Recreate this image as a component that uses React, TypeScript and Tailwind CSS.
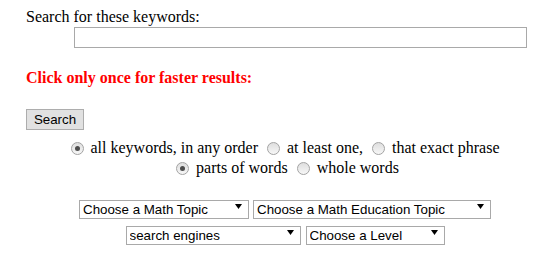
import React from 'react'

const serif = { fontFamily: '"Liberation Serif", "Times New Roman", serif' }

function Radio({ checked = false, className = '' }: { checked?: boolean; className?: string }) {
  return (
    <span
      className={`flex h-[13px] w-[13px] shrink-0 items-center justify-center rounded-full border border-[#a3a3a3] bg-gradient-to-b from-[#dedede] to-[#f7f7f7] ${className}`}
    >
      {checked && <span className="h-[5px] w-[5px] rounded-full bg-[#4d4d4d]" />}
    </span>
  )
}

function Select({ label, width }: { label: string; width: string }) {
  return (
    <div className={`relative h-[19px] ${width}`}>
      <select
        defaultValue={label}
        className="h-full w-full appearance-none rounded-none border border-[#a9a9a9] bg-white pl-[3px] text-[13.33px] leading-[17px] text-black outline-none"
        style={{ fontFamily: '"Liberation Sans", Arial, sans-serif' }}
      >
        <option>{label}</option>
      </select>
      {/* dropdown arrow */}
      <svg
        className="pointer-events-none absolute right-[7px] top-[7px]"
        width="7"
        height="5"
        viewBox="0 0 7 5"
      >
        <path d="M0 0h7L3.5 5z" fill="#000" />
      </svg>
    </div>
  )
}

export default function App() {
  return (
    <div className="min-h-[260px] w-[550px] bg-white pl-[26px] pr-[6px] pt-[8px] text-[16px] text-black" style={serif}>
      <div className="leading-[18px]">Search for these keywords:</div>
      <input
        type="text"
        className="ml-[48px] mt-[1px] block h-[21px] w-[453px] border border-[#a9a9a9] bg-white outline-none"
      />

      <div className="mt-[21px] font-bold leading-[18px] text-[#ff0000]">Click only once for faster results:</div>

      <button
        className="mt-[22px] block h-[21px] w-[58px] border border-[#adadad] bg-[#e1e1e1] text-[13.33px] leading-[17px] text-black"
        style={{ fontFamily: '"Liberation Sans", Arial, sans-serif' }}
      >
        Search
      </button>

      {/* keyword options */}
      <div className="mt-[8px] flex h-[20px] items-center justify-center pr-[5px] leading-[18px]">
        <Radio checked className="ml-[5px] mr-[7px]" />
        <span>all keywords, in any order</span>
        <Radio className="ml-[9px] mr-[7px]" />
        <span>at least one,</span>
        <Radio className="ml-[9px] mr-[7px]" />
        <span>that exact phrase</span>
      </div>
      <div className="flex h-[20px] items-center justify-center leading-[18px]">
        <Radio checked className="ml-[5px] mr-[7px]" />
        <span>parts of words</span>
        <Radio className="ml-[9px] mr-[7px]" />
        <span>whole words</span>
      </div>

      <div className="mt-[19px] flex justify-center gap-[4px]">
        <Select label="Choose a Math Topic" width="w-[170px]" />
        <Select label="Choose a Math Education Topic" width="w-[238px]" />
      </div>
      <div className="mt-[7px] flex justify-center gap-[5px]">
        <Select label="search engines" width="w-[175px]" />
        <Select label="Choose a Level" width="w-[139px]" />
      </div>
    </div>
  )
}
